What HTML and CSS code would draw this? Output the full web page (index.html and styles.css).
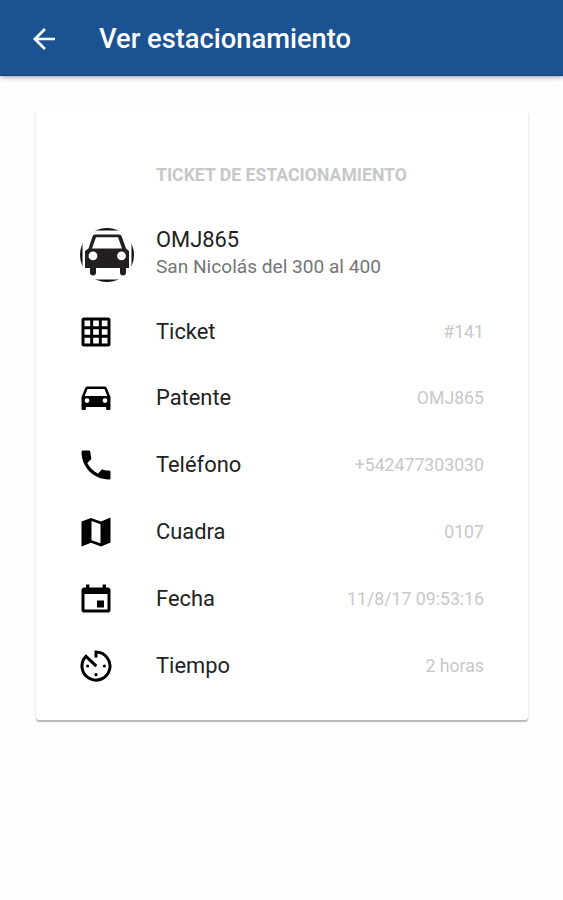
FILE: index.html
```html
<!DOCTYPE html>
<html lang="es">
<head>
<meta charset="utf-8">
<title>Ver estacionamiento</title>
<link rel="stylesheet" href="styles.css">
</head>
<body>
<header class="toolbar">
  <svg class="back" viewBox="0 0 22 22"><path d="M22 9.650v2.700H5.200l7.700 7.750L11 22 0 11 11 0l1.900 1.900-7.700 7.750z"/></svg>
  <h1 class="title">Ver estacionamiento</h1>
</header>
<main class="card">
  <h2 class="card-header">TICKET DE ESTACIONAMIENTO</h2>
  <section class="vehicle">
    <svg class="avatar" viewBox="0 0 54 54">
      <defs><clipPath id="round"><circle cx="27" cy="27" r="27"/></clipPath></defs>
      <rect class="frame" x="1" y="1" width="52" height="52" clip-path="url(#round)"/>
      <path fill-rule="evenodd" d="M15 6.500h24q2 0 2.700 2l4.300 12 3 2.500v17h-3v4.500a3 3 0 0 1-6 0V40H16v4.500a3 3 0 0 1-6 0V40H5V23l3.500-2.500 4-12Q13 6.500 15 6.500zM16 9.200l-4 11.300h30L38 9.200zM13 23.500a4.400 4.400 0 1 0 0 8.800 4.400 4.400 0 0 0 0-8.800zM41.500 23.500a4.400 4.400 0 1 0 0 8.800 4.400 4.400 0 0 0 0-8.800z"/>
    </svg>
    <div class="vehicle-text">
      <h3 class="plate">OMJ865</h3>
      <p class="street">San Nicolás del 300 al 400</p>
    </div>
  </section>
  <ul class="rows">
    <li class="row">
      <svg class="icon" viewBox="0 0 32 32"><path fill-rule="evenodd" d="M4 1.500h24A2.500 2.500 0 0 1 30.500 4v24a2.500 2.500 0 0 1-2.500 2.500H4A2.500 2.500 0 0 1 1.500 28V4A2.500 2.500 0 0 1 4 1.500zM4.500 4.500v5.700h5.700V4.500zM13.150 4.500v5.700h5.700V4.500zM21.800 4.500v5.700h5.700V4.500zM4.500 13.150v5.700h5.700v-5.700zM13.150 13.150v5.700h5.700v-5.700zM21.800 13.150v5.700h5.700v-5.700zM4.500 21.800v5.700h5.700v-5.700zM13.150 21.800v5.700h5.700v-5.700zM21.800 21.800v5.700h5.700v-5.700z"/></svg>
      <span class="label">Ticket</span><span class="value">#141</span>
    </li>
    <li class="row">
      <svg class="icon" viewBox="0 0 32 32"><path fill-rule="evenodd" d="M7.500 4.500h17c1.100 0 1.900.6 2.300 1.600L30.500 15v11.500q0 1.500-1.500 1.500h-1.500q-1.500 0-1.500-1.500V25H6v1.500Q6 28 4.500 28H3q-1.500 0-1.500-1.500V15l3.700-8.900c.4-1 1.200-1.600 2.300-1.600zM7.500 7l-2.800 7h22.600l-2.800-7zM7 16.200a2.400 2.400 0 1 0 0 4.800 2.400 2.400 0 0 0 0-4.800zM25 16.200a2.400 2.400 0 1 0 0 4.800 2.400 2.400 0 0 0 0-4.800z"/></svg>
      <span class="label">Patente</span><span class="value">OMJ865</span>
    </li>
    <li class="row">
      <svg class="icon" viewBox="0 0 32 32"><path d="M7.300 14.100c2.300 4.500 6 8.200 10.600 10.600l3.500-3.600c.5-.5 1.100-.6 1.700-.4 1.800.6 3.800.9 5.800.9.900 0 1.600.7 1.600 1.600v5.700c0 .9-.7 1.600-1.600 1.600C13.700 30.500 1.500 18.300 1.500 3.100c0-.9.700-1.600 1.600-1.600h5.700c.9 0 1.600.7 1.600 1.600 0 2 .3 4 .9 5.800.2.600 0 1.200-.4 1.600z"/></svg>
      <span class="label">Teléfono</span><span class="value">+542477303030</span>
    </li>
    <li class="row">
      <svg class="icon" viewBox="0 0 32 32"><path fill-rule="evenodd" d="M1.500 5.500 11 2l10 3.400 9.500-3.900v25L21 30.500 11 26.700 1.500 30.500zM11.500 5v19.200L20.500 27.300V8.200z"/></svg>
      <span class="label">Cuadra</span><span class="value">0107</span>
    </li>
    <li class="row">
      <svg class="icon" viewBox="0 0 32 32"><path fill-rule="evenodd" d="M6 1.500h3.400v3h13.200v-3H26v3h1.700a2.800 2.800 0 0 1 2.800 2.800v19.400a2.800 2.800 0 0 1-2.800 2.800H4.300a2.800 2.800 0 0 1-2.800-2.800V7.300a2.800 2.800 0 0 1 2.800-2.800H6zM4.500 11v15.500h23V11zM17 17.500h7v7h-7z"/></svg>
      <span class="label">Fecha</span><span class="value">11/8/17 09:53:16</span>
    </li>
    <li class="row">
      <svg class="icon" viewBox="0 0 32 32"><path class="line" d="M16 7.500V2.100A14 14 0 1 1 6 6.300L16.300 16.200"/><circle cx="7.600" cy="16" r="1.600"/><circle cx="24.400" cy="16" r="1.600"/><circle cx="16" cy="24.700" r="1.600"/></svg>
      <span class="label">Tiempo</span><span class="value">2 horas</span>
    </li>
  </ul>
</main>
</body>
</html>
```
FILE: styles.css
```css
* { box-sizing: border-box; margin: 0; padding: 0; }
body { min-height: 100vh; background: #fefefe; font-family: Roboto, "Liberation Sans", sans-serif; color: #222; }
.toolbar { display: flex; align-items: center; height: 76px; padding: 2px 0 0 33px; background: #1b5292; border-bottom: 1px solid #074286; box-shadow: 0 1px 5px rgba(0,0,0,.4); }
.back { width: 22px; height: 22px; margin-right: 44px; fill: #fff; }
.title { color: #fff; font-size: 27.300px; font-weight: 500; line-height: 36px; white-space: nowrap; }
.card { width: 492px; height: 609px; margin: 35px 0 0 36px; padding: 0 44px; background: #fff; border-radius: 3px; box-shadow: 0 2px 1px rgba(0,0,0,.22), 0 1px 3px rgba(0,0,0,.12); }
.card-header { padding: 52px 0 0 76px; color: #c8c8c8; font-size: 17.650px; font-weight: 700; line-height: 24px; white-space: nowrap; }
.vehicle { display: flex; padding-top: 39px; height: 111.300px; }
.avatar { width: 54px; height: 54px; margin: 2px 22px 0 0; fill: #231f20; }
.frame { fill: none; stroke: #111; stroke-width: 3; }
.plate { font-size: 21.900px; font-weight: 400; line-height: 28px; }
.street { color: #757575; font-size: 19.100px; line-height: 26px; white-space: nowrap; }
.rows { list-style: none; }
.row { display: flex; align-items: center; height: 66.800px; }
.icon { width: 32px; height: 32px; margin-right: 44px; fill: #000; }
.line { fill: none; stroke: #000; stroke-width: 3; }
.label { flex: 1; font-size: 21.900px; line-height: 28px; }
.value { color: #c8c8c8; font-size: 17.700px; line-height: 24px; white-space: nowrap; }
```
